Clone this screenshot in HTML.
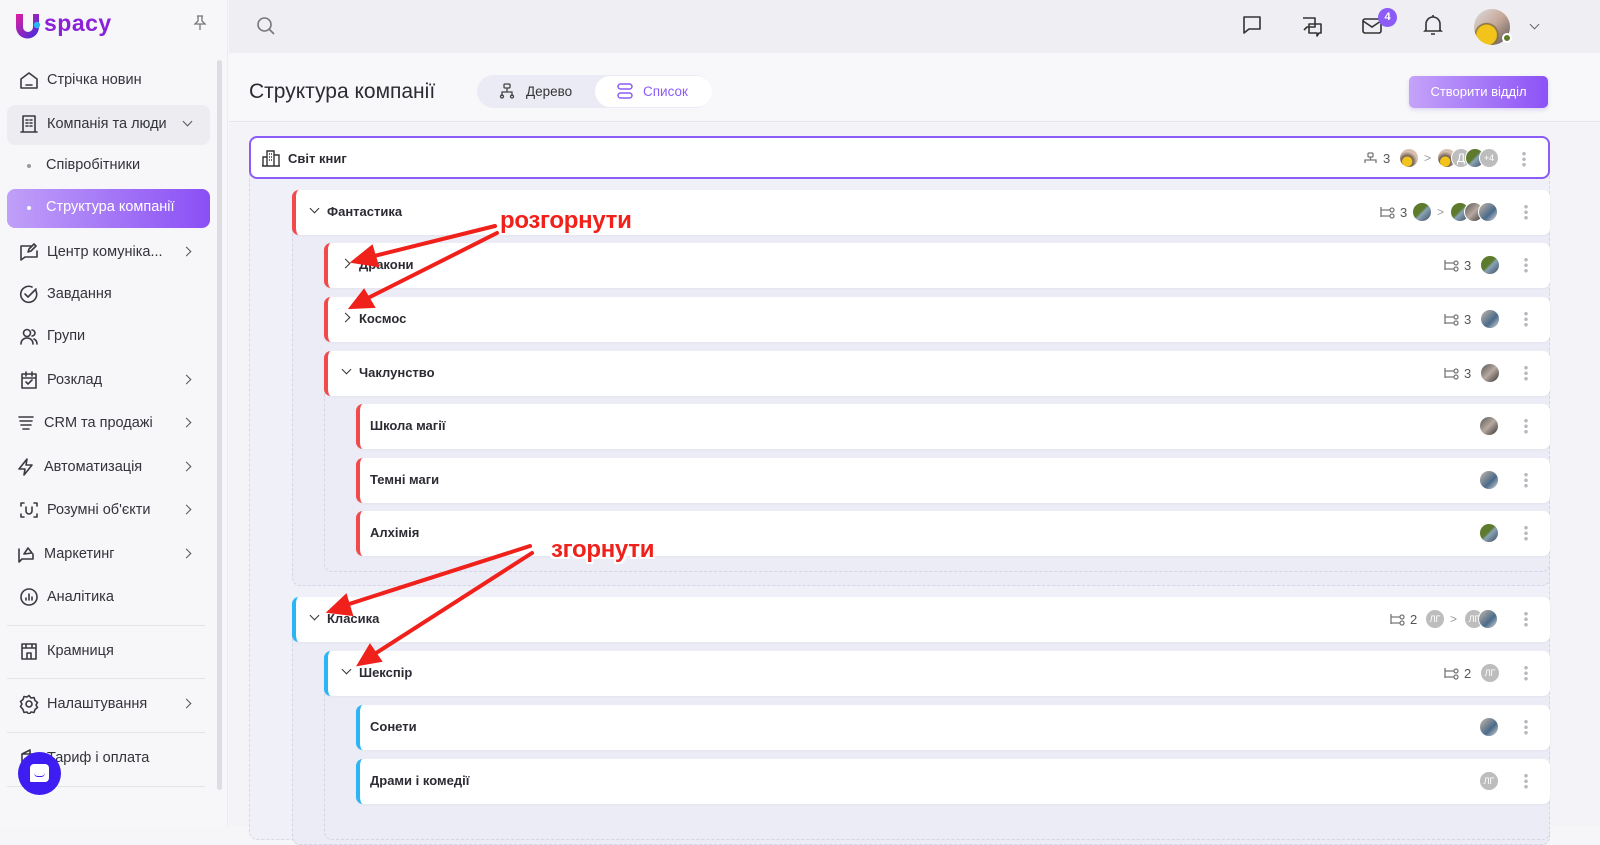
<!DOCTYPE html>
<html><head><meta charset="utf-8"><style>
*{box-sizing:border-box;margin:0;padding:0}
body{width:1600px;height:826px;overflow:hidden;font-family:"Liberation Sans","Noto Sans CJK SC",sans-serif;background:#f6f6f9;position:relative;color:#2b2b33}
.abs{position:absolute}
#side{left:0;top:0;width:228px;height:826px;background:#f7f7fa;border-right:1px solid #ececf1}
.nav{position:absolute;left:19px;font-size:14.5px;color:#33333b;display:flex;align-items:center;height:20px}
.nav svg{width:20px;height:20px;margin-right:8px;fill:none;stroke:#3a3a42;stroke-width:1.6;stroke-linecap:round;stroke-linejoin:round}
.chev{position:absolute;left:183px;width:7px;height:7px;border-right:1.6px solid #555;border-top:1.6px solid #555;transform:rotate(45deg)}
.sep{position:absolute;left:7px;width:198px;height:1px;background:#e3e3e8}
#top{left:229px;top:0;width:1371px;height:53px;background:#eeeef3}
.row{position:absolute;right:50px;height:45px;background:#fff;border-radius:7px;border-left:4px solid #f04a4a;box-shadow:0 1px 2px rgba(0,0,0,.04)}
.row .t{position:absolute;top:14px;font-size:13px;font-weight:bold;color:#2b2b33}
.row .ch{position:absolute;top:17px;width:7px;height:7px;border-right:1.5px solid #333;border-bottom:1.5px solid #333}
.blue{border-left-color:#2bb5f5}
.dots{position:absolute;right:22px;top:14px;width:4px;height:16px;background:radial-gradient(circle,#b8b8c0 1.6px,transparent 2px) 0 0/4px 5.5px repeat-y}
.av{position:absolute;top:12px;width:20px;height:20px;border-radius:50%;border:1px solid #fff}
.g{background:linear-gradient(135deg,#5d7a2d 45%,#8aa3b8 55%,#3b4a5a)}
.p{background:linear-gradient(135deg,#c8b8a8,#4a6a8a 60%,#ddd)}
.d{background:linear-gradient(135deg,#555,#b7a9a0 50%,#333)}
.s{background:radial-gradient(circle at 40% 70%,#f2c41b 30%,#6a5a50 32%,#d8c0b0 60%)}
.lg{background:#bdbdbd;color:#fff;font-size:9px;text-align:center;line-height:18px}
.cnt{position:absolute;top:15px;font-size:13px;color:#555;display:flex;align-items:center}
.cnt svg{width:15px;height:13px;margin-right:5px;fill:none;stroke:#777;stroke-width:1.3}
.gt{position:absolute;top:15px;color:#999;font-size:12px}
.panel{position:absolute;right:50px;border:1px dashed #d4d4e4;border-radius:8px;background:#ececf7}
.ann{position:absolute;color:#f0201a;font-weight:bold;font-size:24px;letter-spacing:-0.3px;text-shadow:-2px -2px 0 #fff,2px -2px 0 #fff,-2px 2px 0 #fff,2px 2px 0 #fff,0 2px 0 #fff,0 -2px 0 #fff,2px 0 0 #fff,-2px 0 0 #fff}
</style></head><body>

<div id="side" class="abs">
 <div class="abs" style="left:14px;top:12px;width:28px;height:28px">
  <svg width="28" height="28" viewBox="0 0 28 28"><defs><linearGradient id="lgU" x1="0" y1="0" x2="1" y2="1"><stop offset="0" stop-color="#e01fa0"/><stop offset="1" stop-color="#3a2de0"/></linearGradient></defs><path d="M2 2h7v13a5 5 0 0 0 10 0V2h6v13a11 11 0 0 1-23 0z" fill="url(#lgU)"/><circle cx="23" cy="13" r="3.2" fill="#2ab8f5"/></svg>
 </div>
 <div class="abs" style="left:44px;top:10px;font-size:23px;font-weight:bold;color:#8a22d8;letter-spacing:.5px">spacy</div>
 <svg class="abs" style="left:193px;top:15px" width="14" height="16" viewBox="0 0 14 16" fill="none" stroke="#777" stroke-width="1.3"><path d="M4 1h6M5 1v5L2 9h10L9 6V1M7 9v6"/></svg>
 <div class="abs" style="left:217px;top:60px;width:5px;height:730px;border-radius:3px;background:#dddde4"></div>
 <div class="abs" style="left:7px;top:105px;width:203px;height:40px;border-radius:8px;background:#ededf1"></div>
 <div class="abs" style="left:7px;top:189px;width:203px;height:39px;border-radius:8px;background:linear-gradient(90deg,#c0a0f8,#8a4ff5)"></div>

 <div class="nav" style="top:70px"><svg viewBox="0 0 20 20"><path d="M2 9l8-6 8 6v9H2z M7 15h6"/></svg>Стрічка новин</div>
 <div class="nav" style="top:114px"><svg viewBox="0 0 20 20"><path d="M4 2h12v16H4z M2 18h16 M7 6h2M11 6h2M7 9h2M11 9h2M7 12h2M11 12h2"/></svg>Компанія та люди</div>
 <div class="abs" style="left:184px;top:118px;width:7px;height:7px;border-right:1.6px solid #555;border-bottom:1.6px solid #555;transform:rotate(45deg)"></div>
 <div class="abs" style="left:27px;top:164px;width:4px;height:4px;border-radius:50%;background:#999"></div>
 <div class="abs" style="left:46px;top:157px;font-size:14.5px;color:#33333b">Співробітники</div>
 <div class="abs" style="left:27px;top:206px;width:4px;height:4px;border-radius:50%;background:#fff"></div>
 <div class="abs" style="left:46px;top:199px;font-size:14.5px;color:#fff">Структура компанії</div>
 <div class="nav" style="top:242px"><svg viewBox="0 0 20 20"><path d="M2 4h10M2 4v14l4-3h12V9 M9 10l3-1 5-5-2-2-5 5z"/></svg>Центр комуніка...</div><div class="chev" style="top:248px"></div>
 <div class="nav" style="top:284px"><svg viewBox="0 0 20 20"><path d="M17 7A8 8 0 1 1 13 3 M6 10l3 3 8-8"/></svg>Завдання</div>
 <div class="nav" style="top:326px"><svg viewBox="0 0 20 20"><circle cx="8" cy="7" r="3.5"/><path d="M2 18c0-4 3-6 6-6s6 2 6 6 M13 4a3 3 0 0 1 0 6 M15 13c2 1 3 3 3 5"/></svg>Групи</div>
 <div class="nav" style="top:370px"><svg viewBox="0 0 20 20"><path d="M3 4h14v14H3z M3 8h14 M7 2v4M13 2v4 M7 12l2 2 4-4"/></svg>Розклад</div><div class="chev" style="top:376px"></div>
 <div class="nav" style="top:413px;left:16px"><svg viewBox="0 0 20 20"><path d="M3 4h14 M4 8h12 M5 12h10 M7 16h6"/></svg>CRM та продажі</div><div class="chev" style="top:419px"></div>
 <div class="nav" style="top:457px;left:16px"><svg viewBox="0 0 20 20"><path d="M11 2L3 12h6l-1 6 8-10h-6z"/></svg>Автоматизація</div><div class="chev" style="top:463px"></div>
 <div class="nav" style="top:500px"><svg viewBox="0 0 20 20"><path d="M2 6V3h3M15 3h3v3M18 14v3h-3M5 17H2v-3 M7 7v4a3 3 0 0 0 6 0V7"/></svg>Розумні об'єкти</div><div class="chev" style="top:506px"></div>
 <div class="nav" style="top:544px;left:16px"><svg viewBox="0 0 20 20"><path d="M3 5v13l3-3h11V10 M8 10l4-6 4 5z"/></svg>Маркетинг</div><div class="chev" style="top:550px"></div>
 <div class="nav" style="top:587px"><svg viewBox="0 0 20 20"><circle cx="10" cy="10" r="8"/><path d="M7 13v-2M10 13V7M13 13v-3"/></svg>Аналітика</div>
 <div class="sep" style="top:625px"></div>
 <div class="nav" style="top:641px"><svg viewBox="0 0 20 20"><path d="M3 3h14v15H3z M3 7h14 M8 18v-6h4v6 M7 3v4M13 3v4"/></svg>Крамниця</div>
 <div class="sep" style="top:678px"></div>
 <div class="nav" style="top:694px"><svg viewBox="0 0 20 20"><circle cx="10" cy="10" r="3"/><path d="M10 1.5l2 2.5 3-.5 1 3 2.5 2-1.5 2.5 1.5 2.5-2.5 2-1 3-3-.5-2 2.5-2-2.5-3 .5-1-3L1.5 12.5 3 10 1.5 7.5 4 5.5l1-3 3 .5z"/></svg>Налаштування</div><div class="chev" style="top:700px"></div>
 <div class="sep" style="top:732px"></div>
 <div class="nav" style="top:748px"><svg viewBox="0 0 20 20"><path d="M3 6l8-4v4 M3 6h14v12H3z"/></svg>Тариф і оплата</div>
 <div class="sep" style="top:786px"></div>
 <div class="abs" style="left:18px;top:752px;width:43px;height:43px;border-radius:50%;background:#3d1df2"></div>
 <div class="abs" style="left:30px;top:764px;width:19px;height:18px;border-radius:4px 4px 4px 1px;background:#fff"></div>
 <div class="abs" style="left:34px;top:773px;width:11px;height:4px;border-bottom:1.5px solid #3d1df2;border-radius:0 0 6px 6px"></div>
</div>

<div id="top" class="abs">
 <svg class="abs" style="left:27px;top:16px" width="20" height="20" viewBox="0 0 20 20" fill="none" stroke="#777" stroke-width="1.6"><circle cx="8.5" cy="8.5" r="6.5"/><path d="M13.5 13.5L18 18"/></svg>
 <svg class="abs" style="left:1012px;top:14px" width="22" height="22" viewBox="0 0 22 22" fill="none" stroke="#333" stroke-width="1.6" stroke-linejoin="round"><path d="M3 3h16v12H8l-5 4z"/></svg>
 <svg class="abs" style="left:1072px;top:16px" width="22" height="22" viewBox="0 0 22 22" fill="none" stroke="#333" stroke-width="1.6" stroke-linejoin="round"><path d="M2 2h12v9H6l-3 3 M8 8h12v9h-2l-2 3v-3H8z"/></svg>
 <svg class="abs" style="left:1133px;top:17px" width="20" height="18" viewBox="0 0 20 18" fill="none" stroke="#333" stroke-width="1.6"><rect x="1" y="2" width="18" height="14" rx="2"/><path d="M1 4l9 6 9-6"/></svg>
 <div class="abs" style="left:1149px;top:8px;width:19px;height:19px;border-radius:50%;background:#8b5cf6;color:#fff;font-size:11px;font-weight:bold;text-align:center;line-height:19px">4</div>
 <svg class="abs" style="left:1194px;top:14px" width="20" height="22" viewBox="0 0 20 22" fill="none" stroke="#333" stroke-width="1.6"><path d="M3 16V10a7 7 0 0 1 14 0v6l1 1H2z M8 20h4 M10 1v2"/></svg>
 <div class="abs" style="left:1245px;top:9px;width:36px;height:36px;border-radius:50%;background:radial-gradient(circle at 35% 72%,#f2c41b 28%,#7a6a40 32%,transparent 36%),linear-gradient(135deg,#ddd,#c7a89a 50%,#555)"></div>
 <div class="abs" style="left:1273px;top:33px;width:10px;height:10px;border-radius:50%;background:#5e7d2c;border:2px solid #fff"></div>
 <div class="abs" style="left:1302px;top:21px;width:7px;height:7px;border-right:1.5px solid #666;border-bottom:1.5px solid #666;transform:rotate(45deg)"></div>
</div>

<div class="abs" style="left:229px;top:53px;width:1371px;height:69px;background:#f8f8fa;border-bottom:1px solid #e4e4ea"></div>
<div class="abs" style="left:249px;top:80px;font-size:21px;color:#2b2b33">Структура компанії</div>
<div class="abs" style="left:477px;top:75px;width:235px;height:33px;border-radius:17px;background:#ebebf5"></div>
<div class="abs" style="left:595px;top:76px;width:117px;height:31px;border-radius:16px;background:#fff"></div>
<svg class="abs" style="left:499px;top:83px" width="16" height="16" viewBox="0 0 16 16" fill="none" stroke="#444" stroke-width="1.3"><rect x="5" y="1" width="6" height="4" rx="1"/><path d="M8 5v4M3 13V9h10v4"/><circle cx="3" cy="13.5" r="1.5"/><circle cx="13" cy="13.5" r="1.5"/></svg>
<div class="abs" style="left:526px;top:84px;font-size:13.5px;color:#333">Дерево</div>
<svg class="abs" style="left:617px;top:83px" width="16" height="16" viewBox="0 0 16 16" fill="none" stroke="#8b5cf6" stroke-width="1.5"><rect x="1" y="1" width="14" height="5" rx="2.5"/><rect x="1" y="10" width="14" height="5" rx="2.5"/></svg>
<div class="abs" style="left:643px;top:84px;font-size:13.5px;color:#8b5cf6">Список</div>
<div class="abs" style="left:1409px;top:76px;width:139px;height:32px;border-radius:5px;background:linear-gradient(90deg,#c4a3f9,#8c52f6);color:#fff;font-size:13px;text-align:center;line-height:32px;box-shadow:0 2px 4px rgba(120,80,200,.2)">Створити відділ</div>

<div class="abs" style="left:229px;top:123px;width:1371px;height:703px;background:#f3f3f8"></div>
<div class="abs" style="left:249px;top:150px;width:1301px;height:690px;border:1px dashed #d9d9e6;border-radius:8px;background:#f0f0f8"></div>
<div class="panel" style="left:292px;top:215px;height:371px"></div>
<div class="panel" style="left:324px;top:380px;height:192px"></div>
<div class="panel" style="left:292px;top:625px;height:220px"></div>
<div class="panel" style="left:324px;top:680px;height:160px"></div>

<div class="abs" style="left:249px;top:136px;width:1301px;height:43px;background:#fff;border:2px solid #8b5cf6;border-radius:8px">
 <svg class="abs" style="left:10px;top:11px" width="20" height="18" viewBox="0 0 20 18" fill="none" stroke="#333" stroke-width="1.4"><path d="M6 17V2h7v15 M13 6h5v11 M2 17V8h4 M1 17h18 M8 5h1M10 5h1M8 8h1M10 8h1M8 11h1M10 11h1"/></svg>
 <div class="abs" style="left:37px;top:13px;font-size:13px;font-weight:bold">Світ книг</div>
 <div class="cnt" style="left:1112px;top:13px"><svg viewBox="0 0 15 13"><rect x="5" y="1" width="5" height="4" rx="1"/><path d="M7.5 5v3M2 11V8h11v3"/></svg>3</div>
 <div class="av s" style="left:1148px;top:10px"></div>
 <div class="gt" style="left:1173px;top:13px">&gt;</div>
 <div class="av s" style="left:1186px;top:10px"></div>
 <div class="av lg" style="left:1200px;top:10px;font-size:12px">Д</div>
 <div class="av g" style="left:1214px;top:10px"></div>
 <div class="av lg" style="left:1228px;top:10px">+4</div>
 <div class="dots" style="top:13px"></div>
</div>

<div class="row" style="left:292px;top:190px">
 <div class="ch" style="left:15px;top:15px;transform:rotate(45deg)"></div><div class="t" style="left:31px">Фантастика</div>
 <div class="cnt" style="left:1084px"><svg viewBox="0 0 15 13"><path d="M1 1v10M1 4h9M1 10h9"/><circle cx="12" cy="4" r="2"/><circle cx="12" cy="10" r="2"/></svg>3</div>
 <div class="av g" style="left:1116px"></div><div class="gt" style="left:1141px">&gt;</div>
 <div class="av g" style="left:1154px"></div><div class="av d" style="left:1168px"></div><div class="av p" style="left:1182px"></div>
 <div class="dots"></div>
</div>
<div class="row" style="left:324px;top:243px">
 <div class="ch" style="left:14px;top:17px;transform:rotate(-45deg)"></div><div class="t" style="left:31px">Дракони</div>
 <div class="cnt" style="left:1116px"><svg viewBox="0 0 15 13"><path d="M1 1v10M1 4h9M1 10h9"/><circle cx="12" cy="4" r="2"/><circle cx="12" cy="10" r="2"/></svg>3</div>
 <div class="av g" style="left:1152px"></div><div class="dots"></div>
</div>
<div class="row" style="left:324px;top:297px">
 <div class="ch" style="left:14px;top:17px;transform:rotate(-45deg)"></div><div class="t" style="left:31px">Космос</div>
 <div class="cnt" style="left:1116px"><svg viewBox="0 0 15 13"><path d="M1 1v10M1 4h9M1 10h9"/><circle cx="12" cy="4" r="2"/><circle cx="12" cy="10" r="2"/></svg>3</div>
 <div class="av p" style="left:1152px"></div><div class="dots"></div>
</div>
<div class="row" style="left:324px;top:351px">
 <div class="ch" style="left:15px;top:15px;transform:rotate(45deg)"></div><div class="t" style="left:31px">Чаклунство</div>
 <div class="cnt" style="left:1116px"><svg viewBox="0 0 15 13"><path d="M1 1v10M1 4h9M1 10h9"/><circle cx="12" cy="4" r="2"/><circle cx="12" cy="10" r="2"/></svg>3</div>
 <div class="av d" style="left:1152px"></div><div class="dots"></div>
</div>
<div class="row" style="left:356px;top:404px"><div class="t" style="left:10px">Школа магії</div><div class="av d" style="left:1119px"></div><div class="dots"></div></div>
<div class="row" style="left:356px;top:458px"><div class="t" style="left:10px">Темні маги</div><div class="av p" style="left:1119px"></div><div class="dots"></div></div>
<div class="row" style="left:356px;top:511px"><div class="t" style="left:10px">Алхімія</div><div class="av g" style="left:1119px"></div><div class="dots"></div></div>

<div class="row blue" style="left:292px;top:597px">
 <div class="ch" style="left:15px;top:15px;transform:rotate(45deg)"></div><div class="t" style="left:31px">Класика</div>
 <div class="cnt" style="left:1094px"><svg viewBox="0 0 15 13"><path d="M1 1v10M1 4h9M1 10h9"/><circle cx="12" cy="4" r="2"/><circle cx="12" cy="10" r="2"/></svg>2</div>
 <div class="av lg" style="left:1129px">ЛГ</div><div class="gt" style="left:1154px">&gt;</div>
 <div class="av lg" style="left:1168px">ЛГ</div><div class="av p" style="left:1182px"></div>
 <div class="dots"></div>
</div>
<div class="row blue" style="left:324px;top:651px">
 <div class="ch" style="left:15px;top:15px;transform:rotate(45deg)"></div><div class="t" style="left:31px">Шекспір</div>
 <div class="cnt" style="left:1116px"><svg viewBox="0 0 15 13"><path d="M1 1v10M1 4h9M1 10h9"/><circle cx="12" cy="4" r="2"/><circle cx="12" cy="10" r="2"/></svg>2</div>
 <div class="av lg" style="left:1152px">ЛГ</div><div class="dots"></div>
</div>
<div class="row blue" style="left:356px;top:705px"><div class="t" style="left:10px">Сонети</div><div class="av p" style="left:1119px"></div><div class="dots"></div></div>
<div class="row blue" style="left:356px;top:759px"><div class="t" style="left:10px">Драми і комедії</div><div class="av lg" style="left:1119px">ЛГ</div><div class="dots"></div></div>

<svg class="abs" style="left:0;top:0" width="1600" height="826" viewBox="0 0 1600 826">
 <g fill="#f0201a" stroke="#f0201a" stroke-width="4" stroke-linecap="round">
  <line x1="495" y1="226" x2="370" y2="257"/><polygon points="352,262 372,246 378,266" stroke-width="2"/>
  <line x1="497" y1="233" x2="366" y2="299"/><polygon points="350,308 364,290 374,307" stroke-width="2"/>
  <line x1="530" y1="546" x2="346" y2="605"/><polygon points="328,612 346,595 352,615" stroke-width="2"/>
  <line x1="532" y1="553" x2="373" y2="655"/><polygon points="358,665 370,645 381,661" stroke-width="2"/>
 </g>
</svg>
<div class="ann" style="left:500px;top:207px">розгорнути</div>
<div class="ann" style="left:551px;top:536px">згорнути</div>
</body></html>
